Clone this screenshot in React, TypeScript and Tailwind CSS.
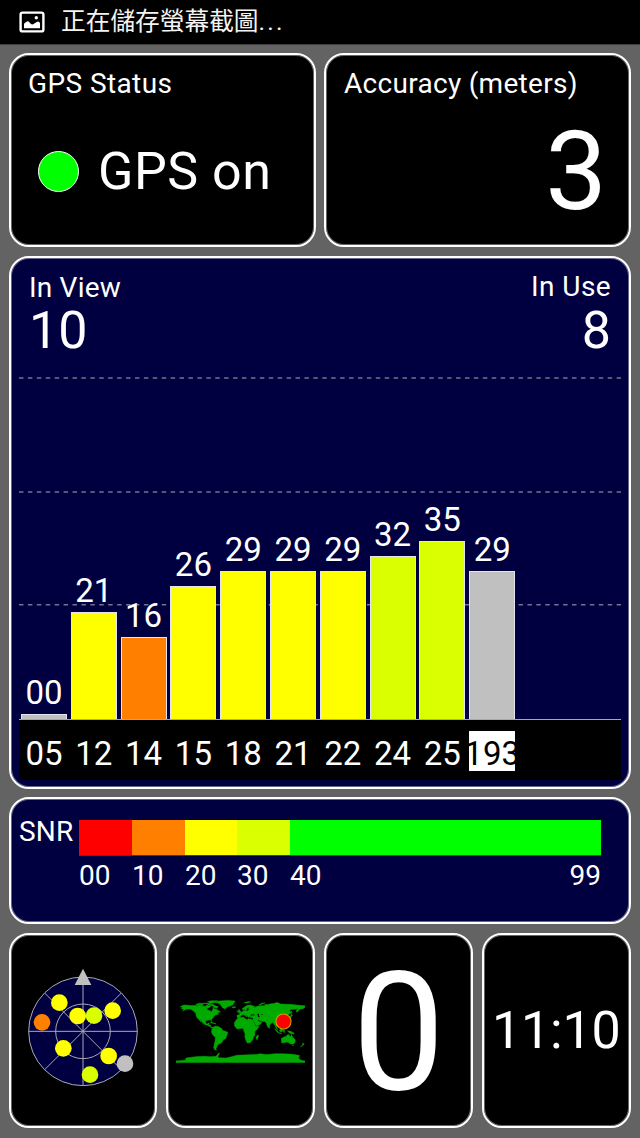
import type { ReactNode } from "react";
import clsx from "clsx";

type Satellite = {
  id: string;
  snr: number;
  color: string;
  highlight?: boolean;
};

const satellites: Satellite[] = [
  { id: "05", snr: 0, color: "bg-[#c0c0c0]" },
  { id: "12", snr: 21, color: "bg-[#ffff00]" },
  { id: "14", snr: 16, color: "bg-[#ff8000]" },
  { id: "15", snr: 26, color: "bg-[#ffff00]" },
  { id: "18", snr: 29, color: "bg-[#ffff00]" },
  { id: "21", snr: 29, color: "bg-[#ffff00]" },
  { id: "22", snr: 29, color: "bg-[#ffff00]" },
  { id: "24", snr: 32, color: "bg-[#d9ff00]" },
  { id: "25", snr: 35, color: "bg-[#d9ff00]" },
  { id: "193", snr: 29, color: "bg-[#c0c0c0]", highlight: true },
];

const scale = [
  { label: "00", color: "bg-[#ff0000]", width: "w-[53px]" },
  { label: "10", color: "bg-[#ff8000]", width: "w-[53px]" },
  { label: "20", color: "bg-[#ffff00]", width: "w-[52px]" },
  { label: "30", color: "bg-[#d9ff00]", width: "w-[53px]" },
  { label: "40", color: "bg-[#00ff00]", width: "w-[311px]" },
];

const skyDots = [
  { x: 178, y: 232, fill: "#ffff00" },
  { x: 126, y: 291, fill: "#ff8000" },
  { x: 233, y: 272, fill: "#ffff00" },
  { x: 282, y: 271, fill: "#d9ff00" },
  { x: 338, y: 256, fill: "#ffff00" },
  { x: 190, y: 369, fill: "#ffff00" },
  { x: 326, y: 392, fill: "#ffff00" },
  { x: 375, y: 415, fill: "#c0c0c0" },
  { x: 270, y: 448, fill: "#d9ff00" },
];

// land outlines as longitude / negative latitude
const land = [
  "-168,-66 -162,-70 -156,-71 -140,-70 -128,-70 -115,-69 -108,-68 -96,-68 -94,-72 -88,-69 -82,-69 -86,-65 -94,-61 -93,-58 -85,-55 -80,-52 -79,-55 -77,-60 -77,-62 -70,-60 -65,-58 -61,-55 -56,-52 -60,-50 -66,-50 -61,-46 -66,-44 -70,-43 -74,-40 -76,-36 -81,-31 -81,-25 -84,-30 -90,-29 -97,-27 -97,-21 -94,-18 -91,-19 -90,-21 -87,-21 -89,-16 -84,-15 -83,-10 -79,-9 -77,-7 -81,-7 -86,-11 -93,-15 -100,-17 -106,-22 -112,-30 -114,-31 -110,-23 -117,-32 -121,-35 -124,-41 -124,-47 -130,-54 -140,-60 -150,-60 -156,-57 -162,-55 -157,-59 -165,-61 -161,-64",
  "-125,-73 -118,-75 -115,-73 -105,-73 -104,-69 -115,-69",
  "-92,-74 -84,-73 -78,-73 -70,-69 -62,-66 -66,-62 -73,-64 -78,-65 -74,-68 -82,-70 -90,-72",
  "-118,-76 -108,-76 -98,-76 -90,-77 -84,-75 -96,-75 -108,-75",
  "-92,-81 -80,-83 -64,-83 -70,-80 -78,-77 -88,-76 -86,-79",
  "-73,-78 -60,-82 -35,-84 -15,-82 -20,-75 -22,-71 -36,-66 -43,-60 -51,-64 -54,-70 -60,-76",
  "-24,-65.5 -16,-66.5 -13,-65 -19,-63.5 -23,-64",
  "-85,-22 -79,-23 -74,-20 -78,-20",
  "-74,-20 -68,-19 -73,-18",
  "-78,-8 -72,-12 -62,-11 -52,-5 -50,0 -40,3 -35,6 -39,15 -41,22 -48,26 -53,34 -57,36 -62,39 -65,42 -66,46 -69,50 -67,55 -72,54 -75,48 -73,38 -71,30 -70,19 -76,14 -81,5 -80,-2",
  "-10,-37 -9,-43 -2,-44 -1,-47 -4,-48.5 2,-51 5,-53 8,-54 9,-57 12,-55 20,-54.5 22,-57 24,-59 30,-60 22,-61 24,-65 21,-64 17,-61 18,-58 14,-55.5 11,-59 6,-58 5,-61 12,-66 18,-70 27,-71 40,-67 41,-66 34,-66 40,-64.5 44,-66 46,-68 55,-69 68,-69 68,-73 74,-72 82,-74 92,-75.5 103,-78 112,-74 128,-73 140,-73 155,-71 170,-70 180,-69 180,-65 177,-62 170,-60 163,-59 162,-55 157,-51 156,-57 163,-62 152,-59 142,-59 136,-55 141,-52 140,-48 132,-43 128,-40 129,-36 126,-34 125,-39 121,-40 118,-38 122,-37 119,-35 122,-31 120,-26 115,-22 108,-21 106,-19 109,-14 107,-10 105,-9 101,-13 100,-10 104,-2 101,-4 98,-9 97,-16 94,-16 91,-22 87,-21 82,-16 80,-10 77,-8 73,-17 72,-21 67,-25 57,-26 55,-27 50,-30 48,-30 51,-25 56,-24 59,-22 55,-17 45,-13 42,-16 35,-28 35,-36 28,-36 27,-40 35,-42 41,-42 38,-46 33,-45 30,-46 28,-42 26,-40 23,-36 19,-41 14,-45 13,-45 18,-40 16,-38 11,-43 8,-44 3,-43 0,-39 -2,-37 -6,-36",
  "-6,-36 10,-37 11,-34 19,-30 22,-33 33,-31 37,-22 43,-12 51,-12 48,-5 40,3 40,14 35,20 35,24 32,28 27,34 19,35 15,27 12,18 13,9 9,1 9,-4 4,-6 -8,-4 -13,-8 -17,-14 -17,-21 -13,-28",
  "44,24 43,18 49,12 50,16 47,25",
  "-6,-50 1,-51 0,-54 -3,-58 -6,-58 -4,-54",
  "-10,-52 -6,-52 -6,-55 -10,-54",
  "52,-72 60,-76 68,-77 58,-73 56,-71",
  "10,-78 20,-80 28,-80 18,-77",
  "130,-31 135,-34 140,-35 142,-39 145,-43 141,-45 140,-40 136,-37 130,-34",
  "142,-54 144,-49 143,-47",
  "80,-10 82,-7 80,-6",
  "95,-5 104,2 106,6 102,4",
  "105,6 115,8 114,9 106,7",
  "109,-2 117,-7 119,-4 116,4 110,3",
  "119,-1 125,-1 121,1 123,5 120,5",
  "120,-18 122,-18 126,-8 122,-10",
  "131,1 141,3 148,6 150,10 143,9 138,8 134,4",
  "114,22 122,18 129,15 131,12 136,12 137,16 141,17 142,11 146,19 153,26 152,34 147,38 140,38 135,34 130,32 118,35 115,34",
  "145,41 148,41 147,43",
  "173,35 178,38 174,41 167,46 170,43 174,40",
  "-180,85 -154,83 -152,77 -140,75 -125,73 -100,72 -85,73 -68,72 -62,64 -58,63 -63,72 -61,76 -40,77 -25,73 -10,69 20,68 45,67 55,65 70,67 78,67 95,65 120,65 145,66 165,70 162,77 167,82 180,85 180,89 -180,89",
];

function Card({ className, children }: { className?: string; children?: ReactNode }) {
  return (
    <section
      className={clsx(
        "rounded-[20px] border-2 border-white shadow-[inset_0_0_0_1px_rgba(255,255,255,0.4)]",
        className
      )}
    >
      {children}
    </section>
  );
}

function StatusBar() {
  return (
    <header className="flex h-[44px] items-center bg-black pl-[19px]">
      <svg className="h-[22px] w-[26px]" viewBox="0 0 26 22">
        <rect x="1.6" y="1.6" width="22.8" height="18.8" rx="2" fill="none" stroke="white" strokeWidth="2.4" />
        <path d="M5 17.2 V12.8 C7 10.8 8.5 9.8 9.5 10.4 C11 11.4 12 13.6 13.5 13.6 C15.5 13.2 17.5 10.6 19 10.6 C20 10.6 21 11.6 21 12.6 V17.2 Z" fill="white" />
        <circle cx="17.3" cy="6.8" r="1.7" fill="white" />
      </svg>
      <span className="ml-[16px] whitespace-pre text-[24.7px] leading-[36px] text-[#f4f4f4]">
        正在儲存螢幕截圖<span className="tracking-[2.2px]">...</span>
      </span>
    </header>
  );
}

function SatelliteChart() {
  return (
    <Card className="relative mt-px flex h-[533px] flex-col bg-[#000040] px-2 pb-[7px]">
      <svg className="absolute left-[8px] top-[118px] h-[232px] w-[602px]" viewBox="0 0 602 232">
        {[2, 116, 228.7].map((y) => (
          <line key={y} x1="0" x2="602" y1={y} y2={y} stroke="#73738f" strokeWidth="1.6" strokeDasharray="4.46 4.46" />
        ))}
      </svg>

      <div className="relative flex h-[92px] shrink-0 justify-between px-[10px]">
        <div className="pt-[16px]">
          <div className="text-[28px] leading-none tracking-[0.2px]">In View</div>
          <div className="mt-[3px] text-[52px] leading-none">10</div>
        </div>
        <div className="pt-[15px] text-right">
          <div className="text-[28px] leading-none tracking-[0.4px]">In Use</div>
          <div className="mt-[4px] text-[52px] leading-none">8</div>
        </div>
      </div>

      <div className="relative flex flex-1 items-end gap-[3.8px] pl-[2px]">
        {satellites.map((s) => (
          <div key={s.id} className="w-[46px] shrink-0 text-center">
            <div className="mb-[5px] text-[33px] leading-none">{String(s.snr).padStart(2, "0")}</div>
            <div
              className={clsx("border border-b-0 border-[#e4e4ee]", s.color)}
              style={{ height: Math.max(s.snr * 5.1, 5) }}
            />
          </div>
        ))}
      </div>

      <div className="relative flex h-[61px] shrink-0 gap-[3.8px] border-t border-[#a8a8a8] bg-black pl-[2px] pt-[11px]">
        {satellites.map((s) => (
          <div
            key={s.id}
            className={clsx(
              "flex h-[40px] w-[46px] shrink-0 justify-center pt-[6px] text-[33px] leading-none",
              s.highlight && "overflow-hidden bg-white text-black"
            )}
          >
            <span>{s.id}</span>
          </div>
        ))}
      </div>
    </Card>
  );
}

function SnrScale() {
  return (
    <Card className="flex h-[127px] bg-[#000040] pl-[8px] pt-[21px] text-[28px] leading-none">
      <span className="-mt-[2px] w-[60px] tracking-[0.2px]">SNR</span>
      <div className="w-[522px]">
        <div className="flex h-[36px] border-b border-[#006020]">
          {scale.map((s) => (
            <div key={s.label} className={clsx("h-full", s.color, s.width)} />
          ))}
        </div>
        <div className="mt-[6px] flex">
          {scale.map((s) => (
            <div key={s.label} className={clsx("flex justify-between", s.width)}>
              <span>{s.label}</span>
              {s.label === "40" && <span>99</span>}
            </div>
          ))}
        </div>
      </div>
    </Card>
  );
}

function SkyView() {
  return (
    <svg className="ml-[17px] mt-[33px] h-[118px] w-[110px]" viewBox="84 128 330 354">
      <circle cx="249" cy="318" r="163" fill="#000040" />
      <g fill="none" stroke="#a9a9b5" strokeWidth="3">
        <circle cx="249" cy="318" r="163" />
        <circle cx="249" cy="318" r="82" />
        <path d="M249 155V481M86 318H412M134 203L364 433M364 203L134 433" />
      </g>
      <path d="M249 130L274 179H224Z" fill="#c0c0c0" />
      {skyDots.map((d) => (
        <circle key={`${d.x}-${d.y}`} cx={d.x} cy={d.y} r="25" fill={d.fill} />
      ))}
    </svg>
  );
}

function WorldMap() {
  return (
    <svg className="ml-[8px] mt-[63px] h-[65px] w-[129px]" viewBox="-180 -90 360 180">
      <g fill="#00aa00" stroke="#00aa00" strokeWidth="1.4">
        {land.map((points) => (
          <polygon key={points} points={points} />
        ))}
      </g>
      <g fill="black">
        <path d="M47 -47L53 -46L51 -42L54 -37L50 -37L48 -42Z" />
        <path d="M59 -46L62 -46L61 -43L58 -44Z" />
      </g>
      <circle cx="120" cy="-25" r="21" fill="#ff0000" stroke="#d0a000" strokeWidth="3" />
    </svg>
  );
}

export default function App() {
  return (
    <div className="h-[1138px] w-[640px] overflow-hidden bg-[#636363] font-['Roboto','Noto_Sans_CJK_TC',sans-serif] text-white">
      <StatusBar />
      <main className="flex flex-col gap-[8px] border-t border-[#404040] px-[9px] pt-[8px]">
        <div className="flex gap-[8px]">
          <Card className="h-[194px] w-[307px] bg-black pl-[17px] pt-[15px]">
            <div className="text-[28px] leading-none tracking-[0.4px]">GPS Status</div>
            <div className="mt-[46px] flex items-center">
              <span className="ml-[10px] size-[41px] shrink-0 rounded-full border border-white bg-[#00ff00]" />
              <span className="ml-[19px] whitespace-nowrap pt-[2px] text-[52px] leading-none tracking-[0.5px]">
                GPS on
              </span>
            </div>
          </Card>
          <Card className="h-[194px] w-[307px] bg-black pl-[18px] pr-[22px] pt-[15px]">
            <div className="text-[28px] leading-none tracking-[0.3px]">Accuracy (meters)</div>
            <div className="mt-[19px] text-right text-[110px] leading-none">3</div>
          </Card>
        </div>

        <SatelliteChart />
        <SnrScale />

        <div className="mt-px flex justify-between">
          <Card className="h-[195px] w-[148px] bg-black">
            <SkyView />
          </Card>
          <Card className="h-[195px] w-[149px] bg-black">
            <WorldMap />
          </Card>
          <Card className="h-[195px] w-[149px] bg-black pt-[15px] text-center">
            <div className="text-[165px] leading-none">0</div>
          </Card>
          <Card className="h-[195px] w-[149px] bg-black pl-[8px] pt-[70px]">
            <div className="w-[126px] whitespace-nowrap text-[52px] leading-none tracking-[-0.2px]">11:10</div>
          </Card>
        </div>
      </main>
    </div>
  );
}
